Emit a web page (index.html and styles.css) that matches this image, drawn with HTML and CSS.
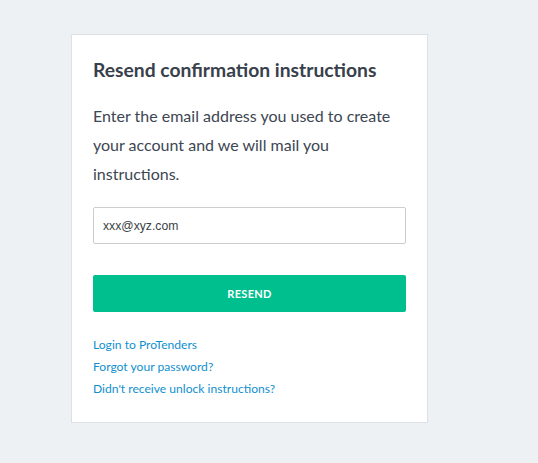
FILE: index.html
```html
<!DOCTYPE html>
<html>
<head>
<meta charset="utf-8">
<link rel="stylesheet" href="styles.css">
</head>
<body>
<div class="card">
  <h2 class="title">Resend confirmation instructions</h2>
  <p class="intro">Enter the email address you used to create your account and we will mail you instructions.</p>
  <form class="form">
    <input class="email" type="text" value="xxx@xyz.com">
    <button class="resend" type="button">RESEND</button>
  </form>
  <div class="links">
    <a href="#">Login to ProTenders</a>
    <a href="#">Forgot your password?</a>
    <a href="#">Didn't receive unlock instructions?</a>
  </div>
</div>
</body>
</html>
```
FILE: styles.css
```css
html, body {
  margin: 0;
  padding: 0;
  background: #eef1f4;
  font-family: Lato, "Liberation Sans", sans-serif;
}
body {
  padding: 34px 0 0 71px;
}
.card {
  box-sizing: border-box;
  width: 357px;
  height: 389px;
  background: #fff;
  border: 1px solid #dde1e6;
  padding: 21px 21px 0 21px;
}
.title {
  margin: 0;
  padding-top: 2px;
  font-size: 19.3px;
  font-weight: 700;
  color: #38404b;
  line-height: 24px;
}
.intro {
  margin: 19px 0 0 0;
  font-size: 16px;
  line-height: 29px;
  color: #3d4652;
}
.form {
  margin-top: 19px;
  display: flex;
  flex-direction: column;
  gap: 31px;
}
.email {
  box-sizing: border-box;
  width: 313px;
  height: 37px;
  border: 1px solid #cdcdcd;
  border-radius: 2px;
  padding: 0 9px;
  font-family: "Liberation Sans", Arial, sans-serif;
  font-size: 12.2px;
  color: #3a3f45;
  outline: none;
}
.resend {
  width: 313px;
  height: 37px;
  border: none;
  border-radius: 2px;
  background: #00bf8f;
  color: #fff;
  font-family: Lato, sans-serif;
  font-weight: 700;
  font-size: 11px;
  letter-spacing: 0.3px;
}
.links {
  margin-top: 22px;
  display: flex;
  flex-direction: column;
}
.links a {
  font-size: 12.1px;
  line-height: 22px;
  color: #0f8fcf;
  text-decoration: none;
}
```
